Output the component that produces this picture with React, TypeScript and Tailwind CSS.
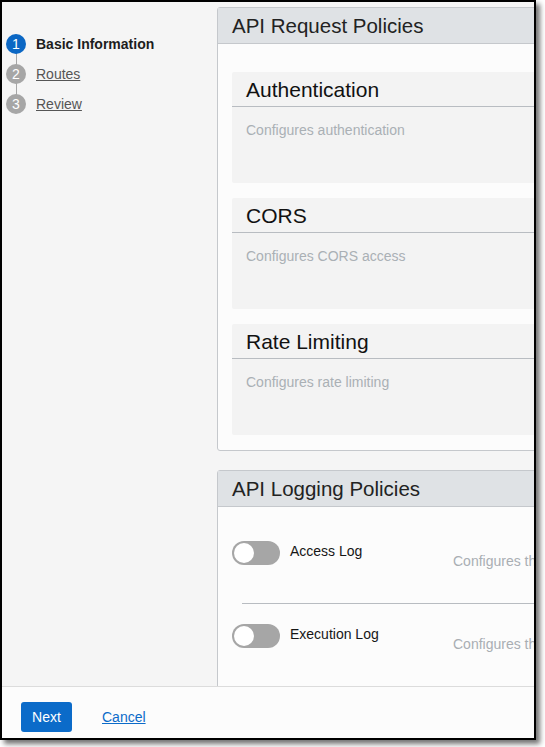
const font = { fontFamily: '"Liberation Sans", Arial, sans-serif' };

const steps = [
  { n: 1, label: "Basic Information", active: true },
  { n: 2, label: "Routes", active: false },
  { n: 3, label: "Review", active: false },
];

const requestPolicies = [
  { title: "Authentication", desc: "Configures authentication" },
  { title: "CORS", desc: "Configures CORS access" },
  { title: "Rate Limiting", desc: "Configures rate limiting" },
];

function Toggle() {
  return (
    <div className="relative h-6 w-12 shrink-0 rounded-full bg-[#a6a6a6]">
      <div className="absolute left-[2px] top-[2px] h-5 w-5 rounded-full bg-white" />
    </div>
  );
}

function LogRow({ label }: { label: string }) {
  return (
    <div className="flex items-start pl-[14px]">
      <Toggle />
      <div className="ml-[10px] w-[163px] shrink-0 pt-[2px] text-[14px] leading-[16px] text-[#161616]">{label}</div>
      <div className="mt-[12px] whitespace-nowrap text-[14px] leading-[16px] text-[#a9aeb3]">Configures the log settings</div>
    </div>
  );
}

export default function App() {
  return (
    <div className="h-[747px] w-[545px] bg-white" style={font}>
      <div className="flex h-[740px] w-[536px] flex-col overflow-hidden border-2 border-black bg-[#f5f5f5] shadow-[4px_4px_5px_rgba(0,0,0,0.55)]">
        <div className="flex min-h-0 flex-1">
          {/* Stepper */}
          <div className="w-[207px] shrink-0 pl-1 pt-[27px]">
            {steps.map((s, i) => (
              <div key={s.n} className="relative flex h-[30px] items-center">
                {i < steps.length - 1 && (
                  <div className="absolute left-[9.5px] top-[20px] h-[20px] w-px bg-[#a6a6a6]" />
                )}
                <div
                  className={`relative flex h-5 w-5 items-center justify-center rounded-full text-[14px] text-white ${
                    s.active ? "bg-[#0b67c4]" : "bg-[#a6a6a6]"
                  }`}
                >
                  {s.n}
                </div>
                <span
                  className={`ml-[10px] text-[14px] ${
                    s.active ? "font-bold text-[#1d1d1d]" : "text-[#555] underline"
                  }`}
                >
                  {s.label}
                </span>
              </div>
            ))}
          </div>

          {/* Main */}
          <div className="min-w-0 flex-1 overflow-hidden pl-[8px] pt-[5px]">
            <div className="w-[360px]">
              <div className="rounded-[3px] border border-[#c5c8cc] bg-[#fcfcfc]">
                <div className="flex h-[36px] items-center border-b border-[#c5c8cc] bg-[#dfe2e5] pl-[14px] pt-[2px] text-[20.5px] text-[#222]">
                  API Request Policies
                </div>
                <div className="flex flex-col gap-[15px] px-[14px] pb-[15px] pt-[28px]">
                  {requestPolicies.map((p) => (
                    <div key={p.title} className="h-[111px] rounded-[2px] bg-[#f3f3f3]">
                      <div className="flex h-[35px] items-center border-b border-[#b8bcc1] pl-[14px] pt-[2px] text-[21px] text-[#111]">
                        {p.title}
                      </div>
                      <div className="pl-[14px] pt-[15px] text-[14px] leading-[16px] text-[#aab0b5]">{p.desc}</div>
                    </div>
                  ))}
                </div>
              </div>

              <div className="mt-[19px] rounded-[3px] border border-[#c5c8cc] bg-[#fcfcfc] pb-10">
                <div className="flex h-[36px] items-center border-b border-[#c5c8cc] bg-[#dfe2e5] pl-[14px] pt-[2px] text-[20.5px] text-[#222]">
                  API Logging Policies
                </div>
                <div className="pt-[34px]">
                  <LogRow label="Access Log" />
                  <div className="ml-[24px] mt-[34px] h-px bg-[#b8bcc1]" />
                  <div className="mt-[20px]">
                    <LogRow label="Execution Log" />
                  </div>
                </div>
              </div>
            </div>
          </div>
        </div>

        {/* Footer */}
        <div className="flex h-[52px] shrink-0 items-start border-t border-[#dcdcdc] bg-[#fcfcfc] pl-[19px] pt-[15px]">
          <button className="h-[30px] w-[51px] rounded-[3px] bg-[#0b6bc9] text-[14px] text-white">Next</button>
          <a href="#" className="ml-[30px] mt-[7px] text-[14px] leading-[16px] text-[#0b6bc9] underline">
            Cancel
          </a>
        </div>
      </div>
    </div>
  );
}
